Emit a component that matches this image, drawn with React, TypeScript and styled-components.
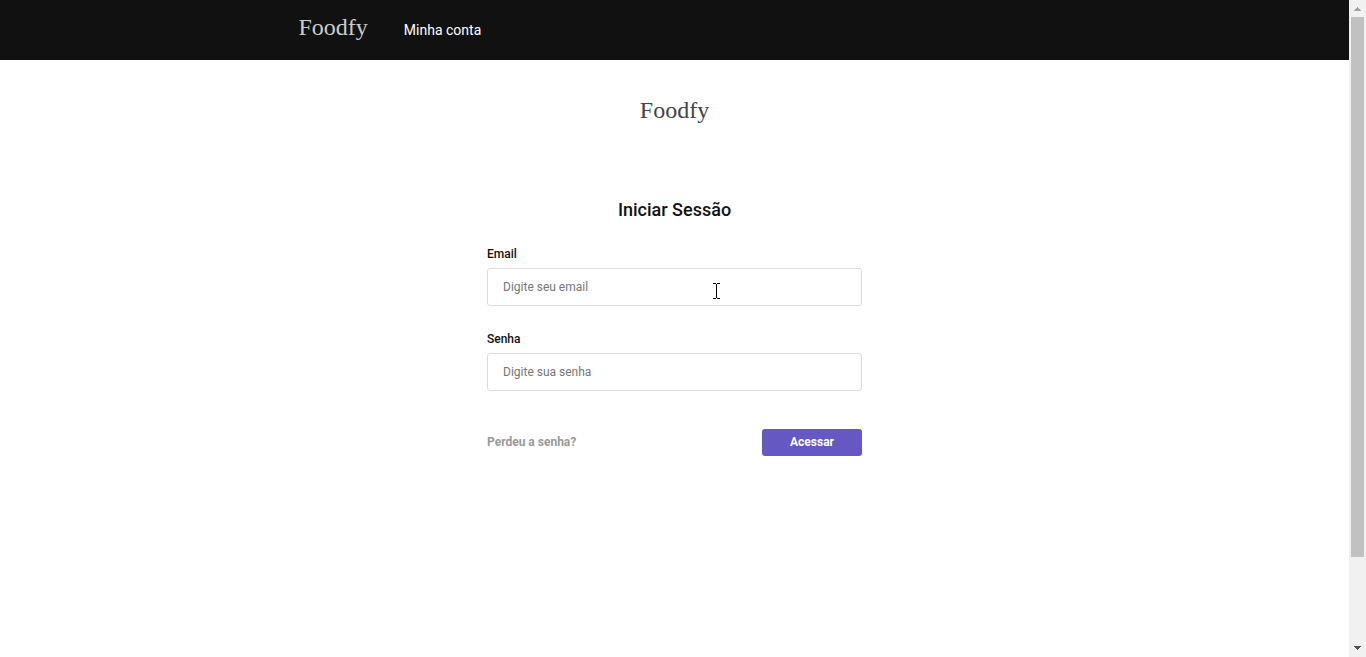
import React from "react";
import styled, { createGlobalStyle } from "styled-components";

const GlobalStyle = createGlobalStyle`
  * {
    box-sizing: border-box;
    margin: 0;
    padding: 0;
  }
  body {
    background: #fff;
    color: #111;
    font-family: Roboto, "Liberation Sans", sans-serif;
    font-size: 12px;
  }
  input, button {
    font: inherit;
  }
`;

const Window = styled.div`
  display: flex;
  height: 100vh;
`;

const Page = styled.div`
  flex: 1;
  min-width: 0;
`;

const Header = styled.header`
  background: #111;
  padding: 0 16px;
`;

const Nav = styled.nav`
  display: flex;
  gap: 36px;
  max-width: 752px;
  height: 60px;
  margin: 0 auto;
  align-items: center;
`;

const Logo = styled.a<{ $light?: boolean }>`
  display: block;
  color: ${(p) => (p.$light ? "#ccc" : "#444")};
  font-family: "Liberation Serif", serif;
  font-size: 24px;
  line-height: 28px;
  padding-bottom: ${(p) => (p.$light ? "6px" : "0")};
  text-decoration: none;
`;

const NavLink = styled.a`
  color: #fff;
  font-size: 14px;
  line-height: 20px;
  text-decoration: none;
`;

const Main = styled.main`
  display: flex;
  flex-direction: column;
  align-items: center;
  padding: 36px 16px;
`;

const Title = styled.h1`
  margin-top: 74px;
  font-size: 18px;
  line-height: 24px;
  font-weight: 500;
`;

const Form = styled.form`
  width: 100%;
  max-width: 375px;
  margin-top: 24px;
`;

const Field = styled.div`
  margin-bottom: 25px;
`;

const Label = styled.label`
  display: block;
  margin-bottom: 6px;
  line-height: 16px;
  font-weight: 500;
`;

const Input = styled.input`
  display: block;
  width: 100%;
  height: 38px;
  padding: 0 15px;
  background: #fff;
  border: 1px solid #ddd;
  border-radius: 3px;
  outline: none;

  &::placeholder {
    color: #777;
    opacity: 1;
  }
`;

const Actions = styled.div`
  display: flex;
  align-items: center;
  justify-content: space-between;
  margin-top: 38px;
`;

const ForgotLink = styled.a`
  padding-bottom: 2px;
  color: #999;
  font-weight: 700;
  text-decoration: none;
`;

const SubmitButton = styled.button`
  width: 100px;
  height: 27px;
  padding-bottom: 2px;
  background: #6558c3;
  border: 0;
  border-radius: 3px;
  color: #fff;
  font-weight: 700;
  cursor: pointer;
`;

const ScrollTrack = styled.div`
  display: flex;
  flex-direction: column;
  width: 17px;
  background: #f1f1f1;
`;

const ScrollArrow = styled.svg`
  display: block;
  flex: none;
`;

const ScrollSpace = styled.div`
  display: grid;
  flex: 1;
  grid-template-rows: 13fr 2fr;
  padding: 0 2px;
`;

const ScrollThumb = styled.div`
  background: #c1c1c1;
`;

const Pointer = styled.svg`
  position: absolute;
  top: 15px;
  left: 226px;
  pointer-events: none;
`;

const InputWrap = styled.div`
  position: relative;
`;

export default function App() {
  return (
    <Window>
      <GlobalStyle />
      <Page>
        <Header>
          <Nav>
            <Logo $light href="#">Foodfy</Logo>
            <NavLink href="#">Minha conta</NavLink>
          </Nav>
        </Header>
        <Main>
          <Logo href="#">Foodfy</Logo>
          <Title>Iniciar Sessão</Title>
          <Form onSubmit={(e: React.FormEvent) => e.preventDefault()}>
            <Field>
              <Label htmlFor="email">Email</Label>
              <InputWrap>
                <Input id="email" type="email" placeholder="Digite seu email" />
                <Pointer width="7" height="16" shapeRendering="crispEdges" aria-hidden="true">
                  <path d="M0 0h3v1H0zM4 0h3v1H4zM3 1h1v14H3zM0 15h3v1H0zM4 15h3v1H4z" fill="#000" />
                </Pointer>
              </InputWrap>
            </Field>
            <Field>
              <Label htmlFor="password">Senha</Label>
              <Input id="password" type="password" placeholder="Digite sua senha" />
            </Field>
            <Actions>
              <ForgotLink href="#">Perdeu a senha?</ForgotLink>
              <SubmitButton type="submit">Acessar</SubmitButton>
            </Actions>
          </Form>
        </Main>
      </Page>
      <ScrollTrack aria-hidden="true">
        <ScrollArrow width="17" height="17" shapeRendering="crispEdges">
          <path d="M8 7h1v1H8zM7 8h3v1H7zM6 9h5v1H6zM5 10h7v1H5z" fill="#a3a3a3" />
        </ScrollArrow>
        <ScrollSpace>
          <ScrollThumb />
        </ScrollSpace>
        <ScrollArrow width="17" height="17" shapeRendering="crispEdges">
          <path d="M5 6h7v1H5zM6 7h5v1H6zM7 8h3v1H7zM8 9h1v1H8z" fill="#505050" />
        </ScrollArrow>
      </ScrollTrack>
    </Window>
  );
}
